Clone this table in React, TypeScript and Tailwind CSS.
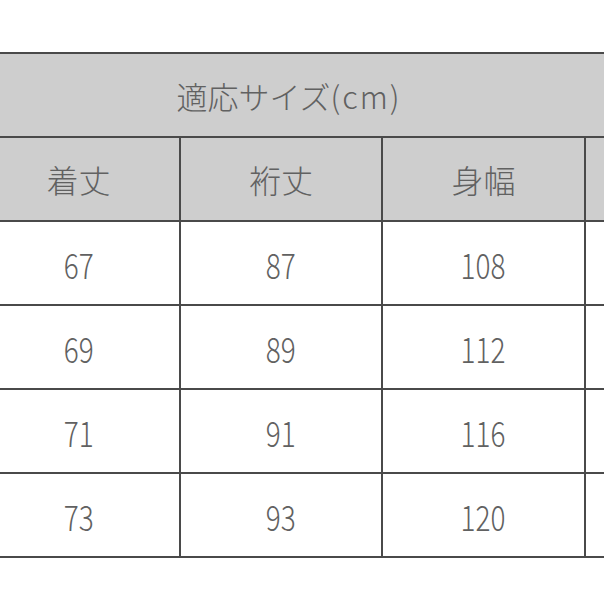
import React from "react";

const font = { fontFamily: '"Noto Sans CJK JP", "Noto Sans", sans-serif' };

const headers = ["着丈", "裄丈", "身幅", ""];
const rows = [
  ["67", "87", "108", ""],
  ["69", "89", "112", ""],
  ["71", "91", "116", ""],
  ["73", "93", "120", ""],
];

export default function App() {
  return (
    <div className="w-[604px] h-[604px] overflow-hidden bg-white pt-[52px]" style={font}>
      <div className="-ml-[22px] w-[812px] border-t-2 border-[#4a4a4a] text-[#616161]">
        {/* title row */}
        <div className="h-[84px] bg-[#cecece] border-b-2 border-[#4a4a4a] flex items-center">
          <div className="w-[622px] text-center text-[31px] font-light leading-none">
            適応サイズ<span className="tracking-[2px]">(cm)</span>
          </div>
        </div>

        {/* column headers */}
        <div className="grid grid-cols-[203px_202px_203px_204px] bg-[#cecece]">
          {headers.map((h, i) => (
            <div
              key={i}
              className="h-[84px] border-b-2 border-r-2 border-[#4a4a4a] flex items-center justify-center text-[32px] font-light leading-none"
            >
              {h}
            </div>
          ))}
        </div>

        {/* values */}
        {rows.map((r, ri) => (
          <div key={ri} className="grid grid-cols-[203px_202px_203px_204px]">
            {r.map((v, i) => (
              <div
                key={i}
                className="h-[84px] border-b-2 border-r-2 border-[#4a4a4a] flex items-center justify-center"
              >
                <span className="inline-block text-[35px] font-light leading-none scale-x-[0.8]">
                  {v}
                </span>
              </div>
            ))}
          </div>
        ))}
      </div>
    </div>
  );
}
